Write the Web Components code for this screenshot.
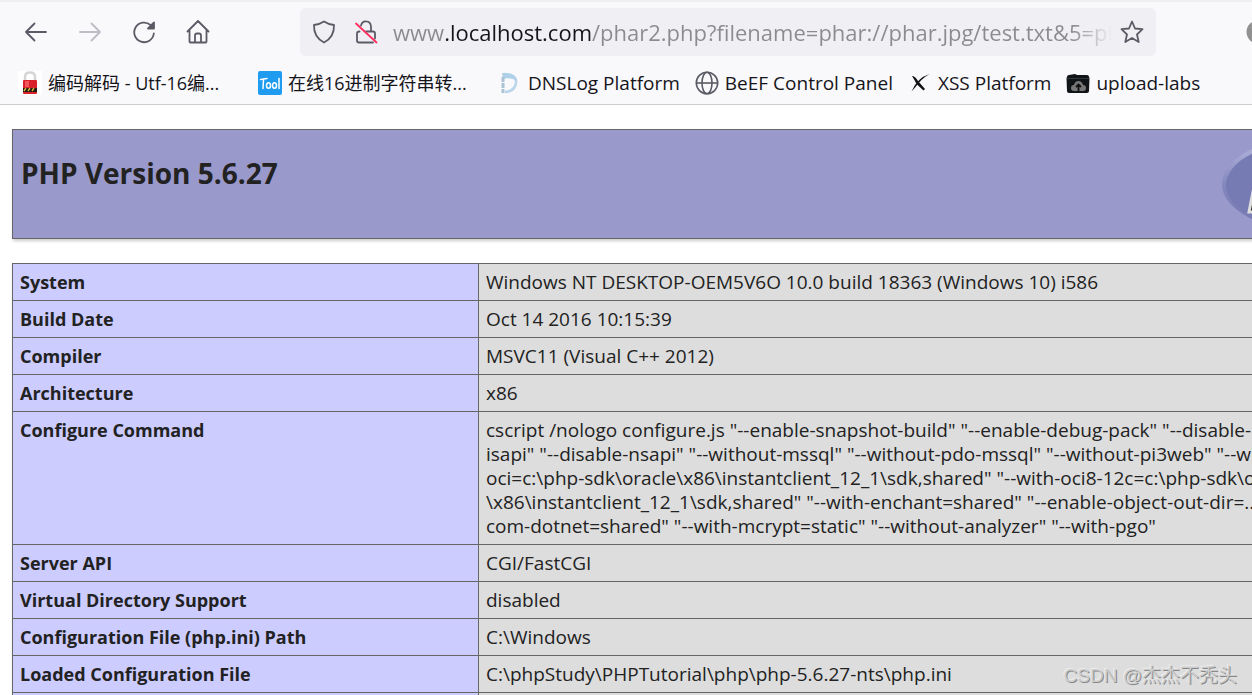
<!DOCTYPE html>
<html lang="en">
<head>
<meta charset="utf-8">
<title>phpinfo()</title>
<style>
  body { margin: 0; font-family: "Open Sans", "Noto Sans CJK SC", sans-serif; color: #222; background: #fff; }
</style>
</head>
<body>
<browser-window>
  <nav-toolbar slot="chrome"></nav-toolbar>
  <bookmarks-bar slot="chrome">
    <bookmark-item icon="lock" long>编码解码 - Utf-16编...</bookmark-item>
    <bookmark-item icon="tool" long>在线16进制字符串转...</bookmark-item>
    <bookmark-item icon="dns">DNSLog Platform</bookmark-item>
    <bookmark-item icon="globe">BeEF Control Panel</bookmark-item>
    <bookmark-item icon="xss">XSS Platform</bookmark-item>
    <bookmark-item icon="folder">upload-labs</bookmark-item>
  </bookmarks-bar>
  <php-header>PHP Version 5.6.27</php-header>
  <php-info></php-info>
  <water-mark slot="overlay">CSDN @杰杰不秃头</water-mark>
</browser-window>

<script>
const attach = (el, html) => { el.attachShadow({ mode: "open" }).innerHTML = html; };

customElements.define("browser-window", class extends HTMLElement {
  constructor() {
    super();
    attach(this, `
      <style>
        :host { display: flex; flex-direction: column; height: 100vh; position: relative; overflow: hidden; }
        header { background: #f9f9fb; border-top: 2px solid #f0f0f4; border-bottom: 1px solid #ccc; flex: none; }
        main { flex: 1; min-height: 0; overflow: auto; scrollbar-width: none; padding: 24px 12px; }
        .page { width: max-content; display: grid; gap: 24px; }
      </style>
      <header><slot name="chrome"></slot></header>
      <main><div class="page"><slot></slot></div></main>
      <slot name="overlay"></slot>`);
  }
});

customElements.define("nav-toolbar", class extends HTMLElement {
  constructor() {
    super();
    attach(this, `
      <style>
        :host { display: flex; align-items: center; height: 60px; padding-left: 24px; box-sizing: border-box; overflow: hidden; }
        nav { display: flex; gap: 30px; flex: none; }
        button { display: block; border: 0; padding: 0; background: none; color: #5b5b66; width: 24px; height: 24px; flex: none; }
        button:disabled { color: #bdbdc5; }
        svg { display: block; width: 24px; height: 24px; fill: none; stroke: currentColor; stroke-width: 1.8; stroke-linecap: round; stroke-linejoin: round; }
        .url { display: flex; align-items: center; flex: 1; min-width: 0; height: 48px; box-sizing: border-box; margin-left: 90px; padding: 0 12px; background: #f0f0f4; border-radius: 6px; }
        .url button + button { margin-left: 18px; }
        input {
          flex: 1; min-width: 0; height: 40px; margin: 0 8px 0 15px; padding: 0; border: 0; outline: 0;
          font: 22px/40px "Open Sans", sans-serif; color: #8a8a8f;
          background: linear-gradient(to right, #8a8a8f 52px, #15141a 52px, #15141a 199px, #8a8a8f 199px, #8a8a8f calc(100% - 40px), transparent);
          -webkit-background-clip: text; background-clip: text; -webkit-text-fill-color: transparent;
        }
        .account { width: 6px; height: 24px; margin-left: 90px; overflow: hidden; flex: none; color: #919191; }
        .account svg { fill: currentColor; stroke: none; }
      </style>
      <nav>
        <button aria-label="Back"><svg viewBox="0 0 24 24"><path d="M22 12H2M10.500 3.500L2 12l8.500 8.500"/></svg></button>
        <button aria-label="Forward" disabled><svg viewBox="0 0 24 24"><path d="M2 12h20M13.500 3.500L22 12l-8.500 8.500"/></svg></button>
        <button aria-label="Reload"><svg viewBox="0 0 24 24"><path d="M21.800 13.500A9.800 9.800 0 1 1 18.500 5"/><path d="M22 2.500V8.500h-6z" fill="currentColor"/></svg></button>
        <button aria-label="Home"><svg viewBox="0 0 24 24"><path d="M1.500 11.500L12 1l10.500 10.500M3.500 10v11.500q0 1 1 1h15q1 0 1-1V10M9 22v-6.500q0-2 2-2h2q2 0 2 2V22"/></svg></button>
      </nav>
      <div class="url">
        <button aria-label="Tracking protection"><svg viewBox="0 0 24 24"><path d="M12 1.500Q16.500 4.500 22 5Q22.500 17 12 22.500Q1.500 17 2 5Q7.500 4.500 12 1.500z"/></svg></button>
        <button aria-label="Connection not secure"><svg viewBox="0 0 24 24"><path d="M7 5.500Q8 1 12 1.300Q17 1.500 17 7v4.500M5.500 11.500q-2.500 0-2.500 2v7q0 2 2 2h14M12 11.500h7q2 0 2 2v5"/><path d="M2 3.500L22.500 22.500" stroke="#ff2f5f"/></svg></button>
        <input aria-label="Address" value="www.localhost.com/phar2.php?filename=phar://phar.jpg/test.txt&amp;5=phpinfo();">
        <button aria-label="Bookmark this page"><svg viewBox="0 0 24 24"><path d="M12 1.500l3 7 7.500.7-5.500 5.300 1.700 7.500-6.700-4-6.700 4 1.700-7.500L1.500 9.200 9 8.500z"/></svg></button>
      </div>
      <button class="account" aria-label="Account"><svg viewBox="0 0 24 24"><circle cx="12" cy="12" r="11.500"/></svg></button>`);
  }
});

customElements.define("bookmarks-bar", class extends HTMLElement {
  constructor() {
    super();
    attach(this, `
      <style>
        :host { display: flex; align-items: center; height: 42px; padding: 0 18px; gap: 15px; overflow: hidden; }
      </style>
      <slot></slot>`);
  }
});

const icons = {
  lock: `<rect width="24" height="24" fill="#fff"/><path d="M7 11V6q0-4.500 5-4.500T17 6v5" fill="none" stroke="#d5d5d5" stroke-width="2.500"/><rect x="5" y="9" width="14" height="14" rx="1" fill="#d9202b"/><rect x="7" y="10" width="4" height="6" fill="#f0565a"/><rect x="5" y="17" width="14" height="4" fill="#201a10"/><path d="M6 20l2-3M10 20l2-3M14 20l2-3" stroke="#d9b43c" stroke-width="1.400"/>`,
  tool: `<rect width="24" height="24" rx="2" fill="#1f9bf0"/><g fill="none" stroke="#fff" stroke-width="1.500" stroke-linecap="round"><path d="M2.500 8.500L9 7.500M5.500 8.500L5 17.500"/><ellipse cx="10.500" cy="14.500" rx="2" ry="2.800"/><ellipse cx="16.500" cy="14.500" rx="2" ry="2.800"/><path d="M21 7.500v10"/></g>`,
  dns: `<path d="M6 3Q19 3 18 12Q17 20 7 21" fill="none" stroke="#bad6ea" stroke-width="2.500"/><path d="M4 2Q16 1 19 10Q13 6 5 8z" fill="#aed0e8"/><path d="M5 6v16" stroke="#a9c3d5" stroke-width="3" stroke-dasharray="5 1"/>`,
  globe: `<g fill="none" stroke="#5b5b66" stroke-width="1.600"><circle cx="12" cy="12" r="10.700"/><ellipse cx="12" cy="12" rx="5" ry="10.700"/><path d="M1.500 12h21"/></g>`,
  xss: `<path d="M4 5Q7 5 10 10L17 18 15.500 19.500 8.500 13Q6 8 4 5zM21.500 3Q13 8 7.500 16L3.500 20.500Q9 7 21.500 3z" fill="#111"/>`,
  folder: `<path d="M1 6q0-2 2-2l6-1 2 1h10q2 0 2 2l.5 1-.5 13q0 2-2 2H3q-2 0-2-2L.5 7z" fill="#111416"/><path d="M1 7.500h22" stroke="#30373a"/><path d="M8 20q-3 0-3-3t3-3q1-4 4.500-4t4.500 4q3 0 3 3t-3 3z" fill="#777"/><path d="M12.500 20v-6M10 16l2.500-2.500L15 16" fill="none" stroke="#111" stroke-width="1.800"/>`
};

customElements.define("bookmark-item", class extends HTMLElement {
  constructor() {
    super();
    attach(this, `
      <style>
        :host { display: block; flex: none; font-size: 19px; }
        :host([long]) { width: 225px; font-size: 18px; }
        a { display: flex; align-items: center; gap: 6px; color: #15141a; text-decoration: none; line-height: 26px; white-space: nowrap; }
        svg { width: 24px; height: 24px; flex: none; }
      </style>
      <a href="#"><svg viewBox="0 0 24 24" aria-hidden="true">${icons[this.getAttribute("icon")]}</svg><span><slot></slot></span></a>`);
  }
});

customElements.define("php-header", class extends HTMLElement {
  constructor() {
    super();
    attach(this, `
      <style>
        :host { display: flex; justify-content: space-between; align-items: flex-start; box-sizing: border-box; height: 110px; padding: 6px 8px 0; background: #99c; border: 1px solid #666; box-shadow: 1px 2px 3px #ccc; }
        h1 { margin: 18px 0 0; font-size: 28px; line-height: 38px; font-weight: 700; }
        svg { width: 181px; height: 97px; flex: none; }
      </style>
      <h1><slot></slot></h1>
      <svg viewBox="0 0 181 97" role="img" aria-label="PHP logo">
        <defs><linearGradient id="rim" x1="0" y1="0" x2="0" y2="1"><stop offset="0" stop-color="#b9bbdf"/><stop offset=".5" stop-color="#8488bd"/><stop offset="1" stop-color="#7477ae"/></linearGradient></defs>
        <ellipse cx="90" cy="48" rx="90" ry="47" fill="url(#rim)"/>
        <ellipse cx="91" cy="49" rx="87" ry="44" fill="#777bb3"/>
        <path d="M27 76l11-56h24q20 0 17 18-3 20-23 20H43l-3 18z" fill="#222" stroke="#ddd" stroke-width="3"/>
      </svg>`);
  }
});

customElements.define("php-info", class extends HTMLElement {
  constructor() {
    super();
    const rows = [
      ["System", "Windows NT DESKTOP-OEM5V6O 10.0 build 18363 (Windows 10) i586"],
      ["Build Date", "Oct 14 2016 10:15:39"],
      ["Compiler", "MSVC11 (Visual C++ 2012)"],
      ["Architecture", "x86"],
      ["Configure Command", [
        `cscript /nologo configure.js "--enable-snapshot-build" "--enable-debug-pack" "--disable-`,
        `isapi" "--disable-nsapi" "--without-mssql" "--without-pdo-mssql" "--without-pi3web" "--with-pdo-`,
        `oci=c:\\php-sdk\\oracle\\x86\\instantclient_12_1\\sdk,shared" "--with-oci8-12c=c:\\php-sdk\\oracle`,
        `\\x86\\instantclient_12_1\\sdk,shared" "--with-enchant=shared" "--enable-object-out-dir=../obj/"`,
        `com-dotnet=shared" "--with-mcrypt=static" "--without-analyzer" "--with-pgo"`].join("<br>")],
      ["Server API", "CGI/FastCGI"],
      ["Virtual Directory Support", "disabled"],
      ["Configuration File (php.ini) Path", "C:\\Windows"],
      ["Loaded Configuration File", "C:\\phpStudy\\PHPTutorial\\php\\php-5.6.27-nts\\php.ini"],
      ["Scan this dir for additional .ini files", "(none)"]
    ];
    attach(this, `
      <style>
        :host { display: block; }
        table { border-collapse: collapse; width: 1400px; table-layout: fixed; box-shadow: 1px 2px 3px #ccc; }
        col:first-child { width: 466px; }
        th, td { border: 1px solid #666; padding: 6px 7px; line-height: 24px; vertical-align: top; text-align: left; white-space: nowrap; }
        th { background: #ccf; font-size: 18px; font-weight: 700; }
        td { background: #ddd; font-size: 19px; }
      </style>
      <table><colgroup><col><col></colgroup><tbody>
        ${rows.map(([k, v]) => `<tr><th scope="row">${k}</th><td>${v}</td></tr>`).join("")}
      </tbody></table>`);
  }
});

customElements.define("water-mark", class extends HTMLElement {
  constructor() {
    super();
    attach(this, `
      <style>
        :host { position: absolute; right: 15px; bottom: 5px; font: 19px/28px "Liberation Sans", "Noto Sans CJK SC", sans-serif; color: #ccc; text-shadow: 1px 1px 0 #888, -1px -1px 0 #eee; pointer-events: none; }
      </style>
      <slot></slot>`);
  }
});
</script>
</body>
</html>
